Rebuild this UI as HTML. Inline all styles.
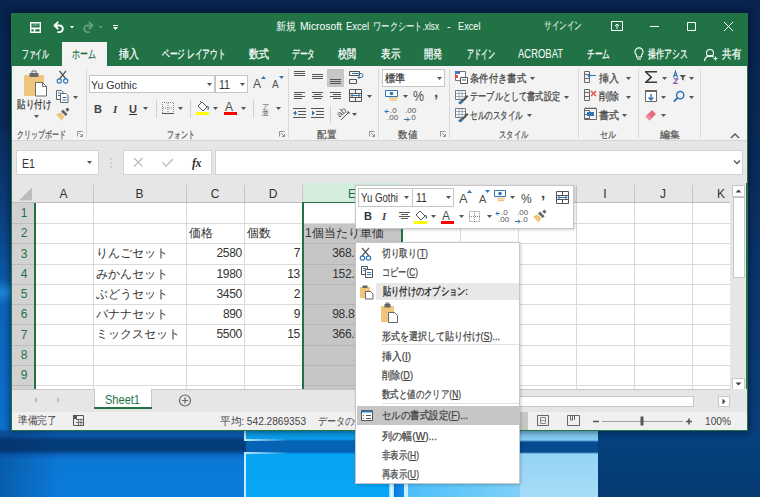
<!DOCTYPE html>
<html><head><meta charset="utf-8">
<style>
html,body{margin:0;padding:0;width:760px;height:497px;overflow:hidden;background:#0a2b5c;font-family:"Liberation Sans",sans-serif;}
.a{position:absolute;}
.t{position:absolute;white-space:nowrap;line-height:1;}
.s{-webkit-text-stroke:0.25px currentColor;}
svg{position:absolute;overflow:visible;}
</style></head><body>
<div class="a" style="left:0px;top:0px;width:760px;height:497px;background:linear-gradient(180deg,#08234c 0px,#0a2a58 150px,#0b3670 300px,#0a3e7a 430px,#0a3e7a 497px);"></div>
<div class="a" style="left:0px;top:130px;width:11px;height:300px;background:linear-gradient(180deg,#0a2d5c 0px,#0b4080 90px,#0b5aa8 150px,#1a86d8 162px,#0c64ba 175px,#0c6fcc 300px);"></div>
<div class="a" style="left:0px;top:430px;width:244px;height:67px;background:linear-gradient(180deg,#0e70cc 0px,#0c62b8 5px,#053e7e 10px,#043b78 20px,#0a66c4 25px,#0b78d6 30px,#0b7bd9 67px);"></div>
<div class="a" style="left:0px;top:430px;width:60px;height:67px;background:linear-gradient(90deg,rgba(4,40,90,0.35),rgba(4,40,90,0));"></div>
<div class="a" style="left:246px;top:430px;width:274px;height:67px;background:linear-gradient(180deg,#0ca0ee 0px,#0a9fec 9px,#0563b6 11px,#0562b5 22px,#05a3f3 24px,#08a7f5 67px);"></div>
<div class="a" style="left:520px;top:430px;width:78px;height:67px;background:linear-gradient(180deg,#84ccf3 0px,#86cdf3 10px,#064a8f 12px,#064a8f 22px,#96d4f5 24px,#a8dcf8 67px);"></div>
<div class="a" style="left:598px;top:430px;width:162px;height:67px;background:linear-gradient(180deg,#04427f,#063a72);"></div>
<div class="a" style="left:389px;top:470px;width:5px;height:27px;background:linear-gradient(90deg,#7fd6ff,#e0f8ff,#9fe0ff);"></div>
<div class="a" style="left:394px;top:470px;width:10px;height:27px;background:linear-gradient(90deg,#0a78dc,#0f90ea);"></div>
<div class="a" style="left:404px;top:470px;width:4px;height:27px;background:#c8f0ff;"></div>
<div class="a" style="left:408px;top:470px;width:112px;height:27px;background:linear-gradient(90deg,#4cc0f8,#7ed0f8);"></div>
<div class="a" style="left:244px;top:430px;width:2px;height:10px;background:#c0ecff;"></div>
<div class="a" style="left:244px;top:453px;width:2px;height:44px;background:#c0ecff;"></div>
<div class="a" style="left:244px;top:439px;width:45px;height:2px;background:linear-gradient(90deg,#c0ecff,rgba(192,236,255,0));"></div>
<div class="a" style="left:244px;top:452px;width:45px;height:2px;background:linear-gradient(90deg,#c0ecff,rgba(192,236,255,0));"></div>
<div class="a" style="left:11px;top:13px;width:737px;height:418px;background:#217346;box-shadow:0 0 6px 2px rgba(0,10,30,0.45);"></div>
<div class="t " style="left:276px;top:21px;font-size:11px;color:#ffffff;transform:scaleX(0.909);transform-origin:0 0;">新規</div>
<div class="t " style="left:299.5px;top:21px;font-size:11px;color:#ffffff;transform:scaleX(0.941);transform-origin:0 0;">Microsoft</div>
<div class="t " style="left:345.5px;top:21px;font-size:11px;color:#ffffff;transform:scaleX(0.855);transform-origin:0 0;">Excel</div>
<div class="t " style="left:372.5px;top:21px;font-size:11px;color:#ffffff;transform:scaleX(0.750);transform-origin:0 0;">ワークシート.xlsx</div>
<div class="t " style="left:447px;top:21px;font-size:11px;color:#ffffff;">-</div>
<div class="t " style="left:457.5px;top:21px;font-size:11px;color:#ffffff;transform:scaleX(0.836);transform-origin:0 0;">Excel</div>
<div class="t " style="left:544px;top:20px;font-size:11px;color:#ffffff;transform:scaleX(0.691);transform-origin:0 0;">サインイン</div>
<div class="a" style="left:62px;top:42px;width:45px;height:24px;background:#f3f3f3;"></div>
<div class="t s" style="left:22px;top:48px;font-size:12px;color:#ffffff;transform:scaleX(0.562);transform-origin:0 0;">ファイル</div>
<div class="t s" style="left:119px;top:48px;font-size:12px;color:#ffffff;transform:scaleX(0.833);transform-origin:0 0;">挿入</div>
<div class="t s" style="left:162px;top:48px;font-size:12px;color:#ffffff;transform:scaleX(0.639);transform-origin:0 0;">ページ レイアウト</div>
<div class="t s" style="left:249px;top:48px;font-size:12px;color:#ffffff;transform:scaleX(0.833);transform-origin:0 0;">数式</div>
<div class="t s" style="left:292px;top:48px;font-size:12px;color:#ffffff;transform:scaleX(0.639);transform-origin:0 0;">データ</div>
<div class="t s" style="left:338px;top:48px;font-size:12px;color:#ffffff;transform:scaleX(0.750);transform-origin:0 0;">校閲</div>
<div class="t s" style="left:381px;top:48px;font-size:12px;color:#ffffff;transform:scaleX(0.792);transform-origin:0 0;">表示</div>
<div class="t s" style="left:424px;top:48px;font-size:12px;color:#ffffff;transform:scaleX(0.771);transform-origin:0 0;">開発</div>
<div class="t s" style="left:467px;top:48px;font-size:12px;color:#ffffff;transform:scaleX(0.583);transform-origin:0 0;">アドイン</div>
<div class="t " style="left:518px;top:48px;font-size:12px;color:#ffffff;transform:scaleX(0.788);transform-origin:0 0;">ACROBAT</div>
<div class="t s" style="left:587px;top:48px;font-size:12px;color:#ffffff;transform:scaleX(0.639);transform-origin:0 0;">チーム</div>
<div class="t s" style="left:648px;top:48px;font-size:12px;color:#ffffff;transform:scaleX(0.658);transform-origin:0 0;">操作アシス</div>
<div class="t s" style="left:722px;top:48px;font-size:12px;color:#ffffff;transform:scaleX(0.792);transform-origin:0 0;">共有</div>
<div class="t s" style="left:72px;top:48px;font-size:12px;color:#217346;transform:scaleX(0.667);transform-origin:0 0;">ホーム</div>
<div class="a" style="left:12px;top:66px;width:735px;height:74px;background:#f3f3f3;"></div>
<div class="a" style="left:12px;top:140px;width:735px;height:1px;background:#d5d5d5;"></div>
<div class="a" style="left:86px;top:69px;width:1px;height:69px;background:#d9d9d9;"></div>
<div class="a" style="left:288px;top:69px;width:1px;height:69px;background:#d9d9d9;"></div>
<div class="a" style="left:378px;top:69px;width:1px;height:69px;background:#d9d9d9;"></div>
<div class="a" style="left:449px;top:69px;width:1px;height:69px;background:#d9d9d9;"></div>
<div class="a" style="left:578px;top:69px;width:1px;height:69px;background:#d9d9d9;"></div>
<div class="a" style="left:638px;top:69px;width:1px;height:69px;background:#d9d9d9;"></div>
<div class="a" style="left:700px;top:69px;width:1px;height:69px;background:#d9d9d9;"></div>
<div class="t s" style="left:17px;top:130px;font-size:10px;color:#5a5a5a;transform:scaleX(0.700);transform-origin:0 0;">クリップボード</div>
<div class="t s" style="left:167px;top:130px;font-size:10px;color:#5a5a5a;transform:scaleX(0.700);transform-origin:0 0;">フォント</div>
<div class="t s" style="left:317px;top:130px;font-size:10px;color:#5a5a5a;transform:scaleX(0.950);transform-origin:0 0;">配置</div>
<div class="t s" style="left:398px;top:130px;font-size:10px;color:#5a5a5a;transform:scaleX(0.950);transform-origin:0 0;">数値</div>
<div class="t s" style="left:499px;top:130px;font-size:10px;color:#5a5a5a;transform:scaleX(0.725);transform-origin:0 0;">スタイル</div>
<div class="t s" style="left:600px;top:130px;font-size:10px;color:#5a5a5a;transform:scaleX(0.800);transform-origin:0 0;">セル</div>
<div class="t s" style="left:660px;top:130px;font-size:10px;color:#5a5a5a;">編集</div>
<svg width="760" height="497" style="left:0;top:0" viewBox="0 0 760 497"><path d="M30 22h11v11h-11z" fill="#fff"/><path d="M31.4 23.4h8.2v4.1h-8.2z" fill="#217346"/><path d="M32.6 23.4h5.8v2.9h-5.8z" fill="#fff" opacity="0.25"/><path d="M31.4 29.3h2.3v2.3h-2.3zM35.3 29.3h4.3v2.3h-4.3z" fill="#217346"/><path d="M54.5 25.5l3.2-3.2M54.5 25.5l3.2 3.2M54.5 25.5h5a3.3 3.3 0 0 1 0 6.6h-1.5" fill="none" stroke="#fff" stroke-width="1.9" stroke-linecap="round"/><path d="M70 26h4l-2 2.5z" fill="#fff"/><path d="M92.5 25.5l-3.2-3.2M92.5 25.5l-3.2 3.2M92.5 25.5h-5a3.3 3.3 0 0 0 0 6.6h1.5" fill="none" stroke="#5f9f7c" stroke-width="1.9" stroke-linecap="round"/><path d="M98.5 26h4l-2 2.5z" fill="#5f9f7c"/><path d="M113 25.5h5" stroke="#fff" stroke-width="1"/><path d="M113 27h5l-2.5 3z" fill="#fff"/><g fill="none" stroke="#fff" stroke-width="1"><path d="M611.5 21.5h11v9h-11z"/><path d="M617 29v-5M615 26l2-2 2 2"/><path d="M650 26.5h9"/><path d="M687.5 22.5h8v8h-8z"/><path d="M724 22l9 9M733 22l-9 9"/></g><g fill="none" stroke="#fff" stroke-width="1.1"><path d="M636.5 57v-2a4 4 0 1 1 5 0v2z"/><path d="M637 59h4"/><circle cx="710" cy="53" r="3.5"/><path d="M704.5 61a5.5 5.5 0 0 1 9-4"/><path d="M713.5 58.5h4M715.5 56.5v4"/></g><path d="M77.5 136.5v-5h5M79 133l3.5 3.5M82.5 134v2.5h-2.5" fill="none" stroke="#888" stroke-width="0.9"/><path d="M279.5 136.5v-5h5M281 133l3.5 3.5M284.5 134v2.5h-2.5" fill="none" stroke="#888" stroke-width="0.9"/><path d="M369.5 136.5v-5h5M371 133l3.5 3.5M374.5 134v2.5h-2.5" fill="none" stroke="#888" stroke-width="0.9"/><path d="M440.5 136.5v-5h5M442 133l3.5 3.5M445.5 134v2.5h-2.5" fill="none" stroke="#888" stroke-width="0.9"/><path d="M731 138l4-4 4 4" fill="none" stroke="#555" stroke-width="1.4"/></svg>
<div class="t s" style="left:17px;top:99px;font-size:11px;color:#333;transform:scaleX(0.773);transform-origin:0 0;">貼り付け</div>
<div class="a" style="left:89px;top:75px;width:126px;height:18px;background:#fff;border:1px solid #c6c6c6;box-sizing:border-box;"></div>
<div class="a" style="left:215px;top:75px;width:33px;height:18px;background:#fff;border:1px solid #c6c6c6;box-sizing:border-box;"></div>
<div class="t " style="left:91px;top:80px;font-size:11px;color:#333;transform:scaleX(0.964);transform-origin:0 0;">Yu Gothic</div>
<div class="t " style="left:219px;top:79px;font-size:12px;color:#333;transform:scaleX(0.882);transform-origin:0 0;">11</div>
<div class="t " style="left:253px;top:78px;font-size:12px;color:#505050;font-weight:normal;">A</div>
<div class="t " style="left:272px;top:80px;font-size:10px;color:#505050;">A</div>
<div class="t " style="left:94px;top:104px;font-size:11px;color:#444;font-weight:bold;">B</div>
<div class="t " style="left:113px;top:104px;font-size:11px;color:#444;font-style:italic;font-weight:bold;font-family:Liberation Serif,serif;">I</div>
<div class="t " style="left:129px;top:104px;font-size:11px;color:#444;font-weight:bold;">U</div>
<div class="a" style="left:129px;top:114px;width:8px;height:1px;background:#333;"></div>
<div class="a" style="left:156px;top:100px;width:1px;height:18px;background:#d0d0d0;"></div>
<div class="a" style="left:190px;top:100px;width:1px;height:18px;background:#d0d0d0;"></div>
<div class="a" style="left:196px;top:112px;width:13px;height:3px;background:#ffff00;"></div>
<div class="t " style="left:225px;top:101px;font-size:12px;color:#505050;">A</div>
<div class="a" style="left:224px;top:112px;width:13px;height:3px;background:#ff0000;"></div>
<div class="a" style="left:253px;top:100px;width:1px;height:18px;background:#d0d0d0;"></div>
<div class="t " style="left:262px;top:103px;font-size:7px;color:#505050;">ア</div>
<div class="t " style="left:262px;top:109px;font-size:7px;color:#505050;">亜</div>
<div class="a" style="left:327px;top:69px;width:17px;height:18px;background:#c6c6c6;"></div>
<div class="a" style="left:330px;top:106px;width:1px;height:17px;background:#d0d0d0;"></div>
<div class="t " style="left:337px;top:108px;font-size:9px;color:#555;transform:rotate(-40deg);transform-origin:5px 5px;">ab</div>
<div class="a" style="left:382px;top:69px;width:63px;height:18px;background:#fff;border:1px solid #c6c6c6;box-sizing:border-box;"></div>
<div class="t s" style="left:385px;top:73px;font-size:11px;color:#333;transform:scaleX(0.909);transform-origin:0 0;">標準</div>
<div class="t " style="left:413px;top:89px;font-size:14px;color:#505050;transform:scaleX(0.883);transform-origin:0 0;">%</div>
<div class="t " style="left:434px;top:84px;font-size:15px;color:#505050;font-weight:bold;">,</div>
<div class="t " style="left:390px;top:107px;font-size:8px;color:#555;">.0</div>
<div class="t " style="left:387px;top:114px;font-size:8px;color:#555;">.00</div>
<div class="t " style="left:405px;top:107px;font-size:8px;color:#555;">.00</div>
<div class="t " style="left:409px;top:114px;font-size:8px;color:#555;">.0</div>
<div class="t s" style="left:470px;top:73px;font-size:11px;color:#444444;transform:scaleX(0.848);transform-origin:0 0;">条件付き書式</div>
<div class="t s" style="left:470px;top:91px;font-size:11px;color:#444444;transform:scaleX(0.744);transform-origin:0 0;">テーブルとして書式設定</div>
<div class="t s" style="left:470px;top:110px;font-size:11px;color:#444444;transform:scaleX(0.688);transform-origin:0 0;">セルのスタイル</div>
<div class="t s" style="left:599px;top:73px;font-size:11px;color:#444444;transform:scaleX(0.909);transform-origin:0 0;">挿入</div>
<div class="t s" style="left:599px;top:91px;font-size:11px;color:#444444;transform:scaleX(0.909);transform-origin:0 0;">削除</div>
<div class="t s" style="left:599px;top:110px;font-size:11px;color:#444444;transform:scaleX(0.909);transform-origin:0 0;">書式</div>
<div class="a" style="left:12px;top:141px;width:735px;height:42px;background:#e6e6e6;"></div>
<div class="a" style="left:16px;top:150px;width:83px;height:25px;background:#fff;border:1px solid #d4d4d4;box-sizing:border-box;"></div>
<div class="t " style="left:22px;top:158px;font-size:12px;color:#333;transform:scaleX(0.885);transform-origin:0 0;">E1</div>
<div class="a" style="left:123px;top:150px;width:89px;height:25px;background:#fff;border:1px solid #d4d4d4;box-sizing:border-box;"></div>
<div class="t " style="left:192px;top:157px;font-size:12px;color:#333;font-family:Liberation Serif,serif;font-weight:bold;font-style:italic;letter-spacing:-0.5px;">fx</div>
<div class="a" style="left:215px;top:150px;width:528px;height:25px;background:#fff;border:1px solid #d4d4d4;box-sizing:border-box;"></div>
<div class="a" style="left:12px;top:183px;width:720px;height:206px;background:#fff;"></div>
<div class="a" style="left:12px;top:183px;width:720px;height:20px;background:#e6e6e6;"></div>
<div class="a" style="left:302px;top:183px;width:100px;height:20px;background:#d3ecdc;"></div>
<div class="a" style="left:12px;top:203px;width:22px;height:186px;background:#d2d2d2;"></div>
<div class="a" style="left:304px;top:223px;width:98px;height:166px;background:#c6c6c6;"></div>
<div class="a" style="left:93px;top:203px;width:1px;height:186px;background:#dadada;"></div>
<div class="a" style="left:186px;top:203px;width:1px;height:186px;background:#dadada;"></div>
<div class="a" style="left:244px;top:203px;width:1px;height:186px;background:#dadada;"></div>
<div class="a" style="left:302px;top:203px;width:1px;height:186px;background:#dadada;"></div>
<div class="a" style="left:402px;top:203px;width:1px;height:186px;background:#dadada;"></div>
<div class="a" style="left:460px;top:203px;width:1px;height:186px;background:#dadada;"></div>
<div class="a" style="left:518px;top:203px;width:1px;height:186px;background:#dadada;"></div>
<div class="a" style="left:576px;top:203px;width:1px;height:186px;background:#dadada;"></div>
<div class="a" style="left:634px;top:203px;width:1px;height:186px;background:#dadada;"></div>
<div class="a" style="left:692px;top:203px;width:1px;height:186px;background:#dadada;"></div>
<div class="a" style="left:35px;top:223px;width:697px;height:1px;background:#dadada;"></div>
<div class="a" style="left:12px;top:223px;width:22px;height:1px;background:#bdbdbd;"></div>
<div class="a" style="left:35px;top:243px;width:697px;height:1px;background:#dadada;"></div>
<div class="a" style="left:12px;top:243px;width:22px;height:1px;background:#bdbdbd;"></div>
<div class="a" style="left:35px;top:264px;width:697px;height:1px;background:#dadada;"></div>
<div class="a" style="left:12px;top:264px;width:22px;height:1px;background:#bdbdbd;"></div>
<div class="a" style="left:35px;top:284px;width:697px;height:1px;background:#dadada;"></div>
<div class="a" style="left:12px;top:284px;width:22px;height:1px;background:#bdbdbd;"></div>
<div class="a" style="left:35px;top:304px;width:697px;height:1px;background:#dadada;"></div>
<div class="a" style="left:12px;top:304px;width:22px;height:1px;background:#bdbdbd;"></div>
<div class="a" style="left:35px;top:324px;width:697px;height:1px;background:#dadada;"></div>
<div class="a" style="left:12px;top:324px;width:22px;height:1px;background:#bdbdbd;"></div>
<div class="a" style="left:35px;top:345px;width:697px;height:1px;background:#dadada;"></div>
<div class="a" style="left:12px;top:345px;width:22px;height:1px;background:#bdbdbd;"></div>
<div class="a" style="left:35px;top:365px;width:697px;height:1px;background:#dadada;"></div>
<div class="a" style="left:12px;top:365px;width:22px;height:1px;background:#bdbdbd;"></div>
<div class="a" style="left:35px;top:385px;width:697px;height:1px;background:#dadada;"></div>
<div class="a" style="left:12px;top:385px;width:22px;height:1px;background:#bdbdbd;"></div>
<div class="a" style="left:304px;top:243px;width:97px;height:1px;background:#b6b6b6;"></div>
<div class="a" style="left:304px;top:264px;width:97px;height:1px;background:#b6b6b6;"></div>
<div class="a" style="left:304px;top:284px;width:97px;height:1px;background:#b6b6b6;"></div>
<div class="a" style="left:304px;top:304px;width:97px;height:1px;background:#b6b6b6;"></div>
<div class="a" style="left:304px;top:324px;width:97px;height:1px;background:#b6b6b6;"></div>
<div class="a" style="left:304px;top:345px;width:97px;height:1px;background:#b6b6b6;"></div>
<div class="a" style="left:304px;top:365px;width:97px;height:1px;background:#b6b6b6;"></div>
<div class="a" style="left:304px;top:385px;width:97px;height:1px;background:#b6b6b6;"></div>
<div class="a" style="left:93px;top:185px;width:1px;height:18px;background:#c6c6c6;"></div>
<div class="a" style="left:186px;top:185px;width:1px;height:18px;background:#c6c6c6;"></div>
<div class="a" style="left:244px;top:185px;width:1px;height:18px;background:#c6c6c6;"></div>
<div class="a" style="left:302px;top:185px;width:1px;height:18px;background:#c6c6c6;"></div>
<div class="a" style="left:402px;top:185px;width:1px;height:18px;background:#c6c6c6;"></div>
<div class="a" style="left:460px;top:185px;width:1px;height:18px;background:#c6c6c6;"></div>
<div class="a" style="left:518px;top:185px;width:1px;height:18px;background:#c6c6c6;"></div>
<div class="a" style="left:576px;top:185px;width:1px;height:18px;background:#c6c6c6;"></div>
<div class="a" style="left:634px;top:185px;width:1px;height:18px;background:#c6c6c6;"></div>
<div class="a" style="left:692px;top:185px;width:1px;height:18px;background:#c6c6c6;"></div>
<div class="a" style="left:12px;top:202px;width:720px;height:1px;background:#bdbdbd;"></div>
<div class="a" style="left:302px;top:202px;width:100px;height:1px;background:#217346;"></div>
<div class="a" style="left:34px;top:203px;width:2px;height:186px;background:#217346;"></div>
<div class="a" style="left:302px;top:202px;width:2px;height:187px;background:#217346;"></div>
<div class="a" style="left:401px;top:202px;width:2px;height:187px;background:#217346;"></div>
<div class="t " style="left:58.5px;top:188px;font-size:12px;color:#333;width:10px;text-align:center;">A</div>
<div class="t " style="left:134.5px;top:188px;font-size:12px;color:#333;width:10px;text-align:center;">B</div>
<div class="t " style="left:210.0px;top:188px;font-size:12px;color:#333;width:10px;text-align:center;">C</div>
<div class="t " style="left:268.0px;top:188px;font-size:12px;color:#333;width:10px;text-align:center;">D</div>
<div class="t " style="left:347.0px;top:188px;font-size:12px;color:#217346;width:10px;text-align:center;">E</div>
<div class="t " style="left:426.0px;top:188px;font-size:12px;color:#333;width:10px;text-align:center;">F</div>
<div class="t " style="left:484.0px;top:188px;font-size:12px;color:#333;width:10px;text-align:center;">G</div>
<div class="t " style="left:542.0px;top:188px;font-size:12px;color:#333;width:10px;text-align:center;">H</div>
<div class="t " style="left:600.0px;top:188px;font-size:12px;color:#333;width:10px;text-align:center;">I</div>
<div class="t " style="left:658.0px;top:188px;font-size:12px;color:#333;width:10px;text-align:center;">J</div>
<div class="t " style="left:716.0px;top:188px;font-size:12px;color:#333;width:10px;text-align:center;">K</div>
<div class="t " style="left:13px;top:207.0px;font-size:12px;color:#217346;width:22px;text-align:center;">1</div>
<div class="t " style="left:13px;top:227.0px;font-size:12px;color:#217346;width:22px;text-align:center;">2</div>
<div class="t " style="left:13px;top:247.5px;font-size:12px;color:#217346;width:22px;text-align:center;">3</div>
<div class="t " style="left:13px;top:268.0px;font-size:12px;color:#217346;width:22px;text-align:center;">4</div>
<div class="t " style="left:13px;top:288.0px;font-size:12px;color:#217346;width:22px;text-align:center;">5</div>
<div class="t " style="left:13px;top:308.0px;font-size:12px;color:#217346;width:22px;text-align:center;">6</div>
<div class="t " style="left:13px;top:328.5px;font-size:12px;color:#217346;width:22px;text-align:center;">7</div>
<div class="t " style="left:13px;top:349.0px;font-size:12px;color:#217346;width:22px;text-align:center;">8</div>
<div class="t " style="left:13px;top:369.0px;font-size:12px;color:#217346;width:22px;text-align:center;">9</div>
<div class="t " style="left:189px;top:227px;font-size:12px;color:#333333;">価格</div>
<div class="t " style="left:247px;top:227px;font-size:12px;color:#333333;">個数</div>
<div class="t " style="left:305px;top:227px;font-size:12px;color:#333333;letter-spacing:0.05px;">1個当たり単価</div>
<div class="t " style="left:96px;top:247px;font-size:12px;color:#333333;">りんごセット</div>
<div class="t " style="left:122px;top:247px;font-size:12px;color:#333333;letter-spacing:-0.3px;width:120px;text-align:right;">2580</div>
<div class="t " style="left:180px;top:247px;font-size:12px;color:#333333;letter-spacing:-0.3px;width:120px;text-align:right;">7</div>
<div class="t " style="left:279px;top:247px;font-size:12px;color:#333333;letter-spacing:-0.3px;width:120px;text-align:right;">368.5714286</div>
<div class="t " style="left:96px;top:268px;font-size:12px;color:#333333;">みかんセット</div>
<div class="t " style="left:122px;top:268px;font-size:12px;color:#333333;letter-spacing:-0.3px;width:120px;text-align:right;">1980</div>
<div class="t " style="left:180px;top:268px;font-size:12px;color:#333333;letter-spacing:-0.3px;width:120px;text-align:right;">13</div>
<div class="t " style="left:279px;top:268px;font-size:12px;color:#333333;letter-spacing:-0.3px;width:120px;text-align:right;">152.3076923</div>
<div class="t " style="left:96px;top:288px;font-size:12px;color:#333333;">ぶどうセット</div>
<div class="t " style="left:122px;top:288px;font-size:12px;color:#333333;letter-spacing:-0.3px;width:120px;text-align:right;">3450</div>
<div class="t " style="left:180px;top:288px;font-size:12px;color:#333333;letter-spacing:-0.3px;width:120px;text-align:right;">2</div>
<div class="t " style="left:279px;top:288px;font-size:12px;color:#333333;letter-spacing:-0.3px;width:120px;text-align:right;">1725</div>
<div class="t " style="left:96px;top:308px;font-size:12px;color:#333333;">バナナセット</div>
<div class="t " style="left:122px;top:308px;font-size:12px;color:#333333;letter-spacing:-0.3px;width:120px;text-align:right;">890</div>
<div class="t " style="left:180px;top:308px;font-size:12px;color:#333333;letter-spacing:-0.3px;width:120px;text-align:right;">9</div>
<div class="t " style="left:279px;top:308px;font-size:12px;color:#333333;letter-spacing:-0.3px;width:120px;text-align:right;">98.88888889</div>
<div class="t " style="left:96px;top:328px;font-size:12px;color:#333333;">ミックスセット</div>
<div class="t " style="left:122px;top:328px;font-size:12px;color:#333333;letter-spacing:-0.3px;width:120px;text-align:right;">5500</div>
<div class="t " style="left:180px;top:328px;font-size:12px;color:#333333;letter-spacing:-0.3px;width:120px;text-align:right;">15</div>
<div class="t " style="left:279px;top:328px;font-size:12px;color:#333333;letter-spacing:-0.3px;width:120px;text-align:right;">366.6666667</div>
<div class="a" style="left:730px;top:183px;width:16px;height:206px;background:#e6e6e6;"></div>
<div class="a" style="left:732px;top:185px;width:13px;height:12px;background:#fff;border:1px solid #c6c6c6;box-sizing:border-box;"></div>
<div class="a" style="left:733px;top:197px;width:12px;height:81px;background:#fff;border:1px solid #c6c6c6;box-sizing:border-box;"></div>
<div class="a" style="left:732px;top:378px;width:13px;height:12px;background:#fff;border:1px solid #c6c6c6;box-sizing:border-box;"></div>
<div class="a" style="left:12px;top:389px;width:735px;height:23px;background:#e6e6e6;"></div>
<div class="a" style="left:12px;top:389px;width:718px;height:1px;background:#c6c6c6;"></div>
<div class="a" style="left:94px;top:389px;width:58px;height:19px;background:#fff;border-left:1px solid #c6c6c6;border-right:1px solid #c6c6c6;box-sizing:border-box;"></div>
<div class="a" style="left:94px;top:407px;width:58px;height:2px;background:#217346;"></div>
<div class="t " style="left:105px;top:394px;font-size:12px;color:#217346;transform:scaleX(0.920);transform-origin:0 0;">Sheet1</div>
<div class="a" style="left:440px;top:396px;width:254px;height:11px;background:#fff;border:1px solid #c6c6c6;box-sizing:border-box;"></div>
<div class="a" style="left:718px;top:396px;width:12px;height:11px;background:#fff;border:1px solid #c6c6c6;box-sizing:border-box;"></div>
<div class="a" style="left:12px;top:412px;width:735px;height:18px;background:#f0f0f0;"></div>
<div class="t " style="left:18px;top:415px;font-size:10.5px;color:#444;transform:scaleX(0.886);transform-origin:0 0;">準備完了</div>
<div class="t " style="left:220px;top:416px;font-size:10.5px;color:#444;transform:scaleX(0.965);transform-origin:0 0;">平均: 542.2869353</div>
<div class="t " style="left:318px;top:416px;font-size:10.5px;color:#444;transform:scaleX(0.824);transform-origin:0 0;">データの個数: 5</div>
<div class="a" style="left:520px;top:412px;width:8px;height:18px;background:#c6c6c6;"></div>
<div class="t " style="left:705px;top:416px;font-size:10.5px;color:#444;transform:scaleX(0.968);transform-origin:0 0;">100%</div>
<svg width="760" height="497" style="left:0;top:0" viewBox="0 0 760 497"><rect x="24" y="75" width="20" height="21" rx="1.5" fill="#efc67c"/><path d="M29.5 73h9v4h-9z" fill="#6b6b6b"/><path d="M32 71h4v3h-4z" fill="none" stroke="#6b6b6b" stroke-width="1"/><path d="M35.5 82.5h7l4 4v9.5h-11z" fill="#fff" stroke="#6b6b6b" stroke-width="1"/><path d="M42.5 82.5v4h4" fill="none" stroke="#6b6b6b" stroke-width="1"/><path d="M34 115h5l-2.5 3z" fill="#555"/><g fill="none" stroke-width="1.1"><path d="M59.5 71l6.5 8M66 71l-6.5 8" stroke="#555" stroke-width="1.2"/><circle cx="59.3" cy="81" r="2.1" stroke="#2e75b6"/><circle cx="65.7" cy="81" r="2.1" stroke="#2e75b6"/></g><path d="M56.5 90.5h5l1.5 1.5v7.5h-6.5z" fill="#fff" stroke="#666"/><path d="M60.5 93.5h5.5l2 2v7h-7.5z" fill="#fff" stroke="#666"/><path d="M58 93h2.5M58 95.5h2M62.5 97.5h4M62.5 100h4" stroke="#2e75b6" stroke-width="1"/><path d="M73 96h5l-2.5 3z" fill="#555"/><g transform="translate(0 0)"><path d="M56 114.5L60.5 112.5 64.5 116.5 61.5 120.5z" fill="#efc67c"/><path d="M61 111.5L63 109.6 67.6 114.2 65.6 116z" fill="#666"/><path d="M65.3 109.6L67.4 107.5 69.6 109.7 67.5 111.8z" fill="#666"/></g><path d="M207 83h5l-2.5 3z" fill="#555"/><path d="M240 83h5l-2.5 3z" fill="#555"/><path d="M261 79h5l-2.5-3z" fill="#2e75b6"/><path d="M279 76h5l-2.5 3z" fill="#2e75b6"/><path d="M143 107h5l-2.5 3z" fill="#555"/><g fill="none" stroke="#888" stroke-width="1" stroke-dasharray="1 1"><path d="M162.5 113V102.5h11V113"/><path d="M168 103v10M163 108h10"/></g><path d="M162 113.5h12" stroke="#555"/><path d="M178 107h5l-2.5 3z" fill="#555"/><path d="M198 106l4-4 5 5-4 4z" fill="#fff" stroke="#555" stroke-width="1"/><path d="M207.5 106c1 1.5 1.5 3 0 3.5" fill="none" stroke="#2e75b6" stroke-width="1.3"/><path d="M200 101l2 2" stroke="#555"/><path d="M213 107h5l-2.5 3z" fill="#555"/><path d="M241 107h5l-2.5 3z" fill="#555"/><path d="M276 107h5l-2.5 3z" fill="#555"/><path d="M294 71.5h11M294 73.5h11M294 75.5h11" stroke="#555" stroke-width="1" fill="none"/><path d="M312 74.5h11M312 76.5h11M312 78.5h11" stroke="#555" stroke-width="1" fill="none"/><path d="M330 79.5h11M330 81.5h11M330 83.5h11" stroke="#555" stroke-width="1" fill="none"/><path d="M294 92.5h11M294 94.5h8M294 96.5h11M294 98.5h8" stroke="#555" stroke-width="1" fill="none"/><path d="M312 92.5h11M313.5 94.5h8M312 96.5h11M313.5 98.5h8" stroke="#555" stroke-width="1" fill="none"/><path d="M330 92.5h11M333 94.5h8M330 96.5h11M333 98.5h8" stroke="#555" stroke-width="1" fill="none"/><g fill="none" stroke="#555" stroke-width="1"><path d="M349.5 71.5h10v4h-10zM349.5 79.5h7v4h-7z"/></g><path d="M352 73.5h9a2 2 0 0 1 0 4h-3l1.5-1.5M358 77.5l1.5 1.5" fill="none" stroke="#2e75b6" stroke-width="1"/><g fill="none" stroke="#555" stroke-width="1"><path d="M349.5 89.5h12v12h-12zM349.5 93.5h12M349.5 97.5h12M355.5 89.5v4M355.5 97.5v4"/></g><path d="M351 95.5h9M351 95.5l1.5-1.5M351 95.5l1.5 1.5M360 95.5l-1.5-1.5M360 95.5l-1.5 1.5" stroke="#2e75b6" stroke-width="1" fill="none"/><path d="M367 95h5l-2.5 3z" fill="#555"/><path d="M293 108.5h13M298 111.5h8M298 114.5h8M293 117.5h13" stroke="#555" fill="none"/><path d="M293 113l3-2.5v5z" fill="#2e75b6"/><path d="M297 113h-3" stroke="#2e75b6"/><path d="M311 108.5h13M316 111.5h8M316 114.5h8M311 117.5h13" stroke="#555" fill="none"/><path d="M315 113l-3-2.5v5z" fill="#2e75b6"/><path d="M341 120l8-8M347 112h2v2" stroke="#555" fill="none"/><path d="M352 113h5l-2.5 3z" fill="#555"/><path d="M437 77h5l-2.5 3z" fill="#555"/><path d="M385.5 90.5h12v6h-12z" fill="#fff" stroke="#2e75b6"/><circle cx="391.5" cy="93.5" r="1.8" fill="#2e75b6"/><path d="M389 98h9M390 100h7" stroke="#efc67c" stroke-width="1.5"/><path d="M403 95h5l-2.5 3z" fill="#555"/><path d="M385 111.5h4M385 111.5l2-2M385 111.5l2 2" stroke="#2e75b6" fill="none"/><path d="M404 119.5h5M409 119.5l-2-2M409 119.5l-2 2" stroke="#2e75b6" fill="none"/><path d="M455.5 71.5h10v9h-10z" fill="#fff" stroke="#777"/><path d="M455 71h5v3h-5z" fill="#4472c4"/><path d="M455 75h3v3h-3z" fill="#e84c3d"/><path d="M460.5 77.5h7v6h-7z" fill="#fff" stroke="#555"/><path d="M462 80h4" stroke="#555"/><path d="M455.5 90.5h10v9h-10z" fill="#fff" stroke="#777"/><path d="M456 93.5h9M456 96.5h9M459 91v8M462 91v8" stroke="#9ab" fill="none"/><path d="M459 103l8-8 1.5 1.5-8 8z" fill="#555"/><path d="M458 103l3-3 2 2-3 2z" fill="#2e75b6"/><path d="M455.5 108.5h10v9h-10z" fill="#fff" stroke="#777"/><path d="M456 111.5h9M456 114.5h9M459 109v8M462 109v8" stroke="#9ab" fill="none"/><path d="M459 121l8-8 1.5 1.5-8 8z" fill="#555"/><path d="M458 121l3-3 2 2-3 2z" fill="#2e75b6"/><path d="M530 77h5l-2.5 3z" fill="#555"/><path d="M564 96h5l-2.5 3z" fill="#555"/><path d="M527 114h5l-2.5 3z" fill="#555"/><path d="M584.5 74.5h5v4h-5zM584.5 78.5h5v4h-5z" fill="none" stroke="#666"/><path d="M584.5 71.5h5v3h-5z" fill="none" stroke="#666"/><path d="M588 75.5h8M588 75.5l2-2M588 75.5l2 2" stroke="#2e75b6" fill="none" stroke-width="1.2"/><path d="M584.5 92.5h5v4h-5zM584.5 96.5h5v4h-5z" fill="none" stroke="#666"/><path d="M584.5 89.5h5v3h-5z" fill="none" stroke="#666"/><path d="M591 91l5 5M596 91l-5 5" stroke="#e74c3c" stroke-width="1.3"/><path d="M584.5 110.5h5v4h-5zM584.5 114.5h5v4h-5z" fill="none" stroke="#666"/><path d="M584.5 108.5h12v11h-12z" fill="none" stroke="#666"/><path d="M587 112h7v4h-7z" fill="#2e75b6"/><path d="M586 107v2M589 107v2M592 107v2M595 107v2" stroke="#666"/><path d="M626 77h5l-2.5 3z" fill="#555"/><path d="M626 96h5l-2.5 3z" fill="#555"/><path d="M622 114h5l-2.5 3z" fill="#555"/><path d="M645 71.8h12M645 82.2h12M645.8 72l5.5 5.2-5.5 5.2" fill="none" stroke="#3a3a3a" stroke-width="1.6"/><path d="M662 77h5l-2.5 3z" fill="#555"/><path d="M673.5 77.5l2-6 2 6M674.3 75.5h2.5" fill="none" stroke="#2e75b6" stroke-width="1.2"/><path d="M673.8 78.8h4l-4 4.6h4" fill="none" stroke="#8a5bb5" stroke-width="1.2"/><path d="M679.5 75h6.5l-2.3 2.6v3l-1.8-0.8v-2.2z" fill="#555"/><path d="M689 77h5l-2.5 3z" fill="#555"/><path d="M645.5 90.5h11v11h-11z" fill="#fff" stroke="#666"/><path d="M645 90h12v2h-12z" fill="#666"/><path d="M651 94v6M648.5 97.5l2.5 2.5 2.5-2.5" fill="none" stroke="#2e75b6" stroke-width="1.4"/><path d="M661 96h5l-2.5 3z" fill="#555"/><circle cx="680.2" cy="95.2" r="3.6" fill="none" stroke="#2e75b6" stroke-width="1.5"/><path d="M677.5 98l-3.2 3.2" stroke="#2e75b6" stroke-width="1.8" stroke-linecap="round"/><path d="M689 96h5l-2.5 3z" fill="#555"/><path d="M645.5 116.5l6.5-6.5 4 4-6.5 6.5z" fill="#e66b7f"/><path d="M645.5 116.5l2.2-2.2 4 4-2.2 2.2z" fill="#f08da0"/><path d="M661 114h5l-2.5 3z" fill="#555"/><path d="M87 161h5l-2.5 3z" fill="#555"/><path d="M111 158.5v1M111 162.5v1M111 166.5v1" stroke="#999" stroke-width="1.2"/><path d="M134 158l8.5 8.5M142.5 158l-8.5 8.5" stroke="#bdbdbd" stroke-width="1.3"/><path d="M162.5 162.5l3.5 3.5 7-7" fill="none" stroke="#c3c3c3" stroke-width="1.6"/><path d="M734 160.5l3 3 3-3" fill="none" stroke="#555" stroke-width="1.3"/><path d="M19 200.5h13v-13z" fill="#bdbdbd"/><path d="M735.5 192.5h6l-3-3z" fill="#444"/><path d="M735.5 382.5h6l-3 3z" fill="#444"/><path d="M37 397l-3 3 3 3z" fill="#bbb"/><path d="M57 397l3 3-3 3z" fill="#bbb"/><circle cx="185" cy="400.5" r="5.5" fill="none" stroke="#666" stroke-width="1.2"/><path d="M182 400.5h6M185 397.5v6" stroke="#666" stroke-width="1.2"/><path d="M722.5 398.5v6l3-3z" fill="#444"/><path d="M73.5 415.5h10v10h-10z" fill="none" stroke="#555"/><path d="M73 415h4v4h-4z" fill="#555"/><path d="M76 419.5h7M76 422.5h7M78.5 419v6M81 419v6" stroke="#555" stroke-width="0.8"/><path d="M537.5 415.5h11v10h-11z" fill="none" stroke="#666"/><path d="M540.5 417.5h5v6h-5z" fill="none" stroke="#888"/><path d="M541 420.5h4" stroke="#999"/><path d="M567.5 415.5h12v10h-12z" fill="none" stroke="#666"/><path d="M570.5 415.5v4.5h2v-4.5M574.5 415.5v4.5" fill="none" stroke="#666"/><path d="M602 421.5h81" stroke="#a0a0a0" stroke-width="1"/><path d="M593 421.5h6M686 421.5h6M689 418.5v6" stroke="#555" fill="none" stroke-width="1.6"/><path d="M640.5 416.5h3v9h-3z" fill="#555"/></svg>
<div class="a" style="left:355px;top:185px;width:219px;height:44px;background:#fff;border:1px solid #c6c6c6;box-sizing:border-box;box-shadow:1px 1px 3px rgba(0,0,0,0.18);"></div>
<div class="a" style="left:358px;top:188px;width:55px;height:19px;background:#fff;border:1px solid #c6c6c6;box-sizing:border-box;"></div>
<div class="a" style="left:412px;top:188px;width:42px;height:19px;background:#fff;border:1px solid #c6c6c6;box-sizing:border-box;"></div>
<div class="t " style="left:361px;top:192px;font-size:12px;color:#333;transform:scaleX(0.804);transform-origin:0 0;">Yu Gothi</div>
<div class="t " style="left:416px;top:192px;font-size:12px;color:#333;transform:scaleX(0.882);transform-origin:0 0;">11</div>
<div class="t " style="left:459px;top:192px;font-size:13px;color:#505050;">A</div>
<div class="t " style="left:479px;top:194px;font-size:11px;color:#505050;">A</div>
<div class="t " style="left:521px;top:193px;font-size:12px;color:#444;letter-spacing:0.33px;">%</div>
<div class="t " style="left:541px;top:185px;font-size:15px;color:#444;font-weight:bold;">,</div>
<div class="t " style="left:364px;top:211px;font-size:11px;color:#333;font-weight:bold;">B</div>
<div class="t " style="left:382px;top:211px;font-size:11px;color:#444;font-style:italic;font-weight:bold;font-family:Liberation Serif,serif;">I</div>
<div class="a" style="left:414px;top:221px;width:13px;height:3px;background:#ffff00;"></div>
<div class="t " style="left:442px;top:210px;font-size:12px;color:#505050;">A</div>
<div class="a" style="left:441px;top:221px;width:13px;height:3px;background:#ff0000;"></div>
<div class="t " style="left:501px;top:209px;font-size:8px;color:#555;">.0</div>
<div class="t " style="left:498px;top:216px;font-size:8px;color:#555;">.00</div>
<div class="t " style="left:517px;top:209px;font-size:8px;color:#555;">.00</div>
<div class="t " style="left:521px;top:216px;font-size:8px;color:#555;">.0</div>
<svg width="760" height="497" style="left:0;top:0" viewBox="0 0 760 497"><path d="M404 196h5l-2.5 3z" fill="#555"/><path d="M446 196h5l-2.5 3z" fill="#555"/><path d="M467 193h5l-2.5-3z" fill="#2e75b6"/><path d="M485 190h5l-2.5 3z" fill="#2e75b6"/><path d="M494.5 190.5h11v6h-11z" fill="#fff" stroke="#2e75b6"/><circle cx="500" cy="193.5" r="1.8" fill="#2e75b6"/><path d="M497 198.5h8M498 200.5h6" stroke="#efc67c" stroke-width="1.5"/><path d="M510 196h5l-2.5 3z" fill="#555"/><g fill="none" stroke="#555"><path d="M556.5 191.5h12v12h-12zM556.5 195.5h12M556.5 199.5h12M562.5 191.5v4M562.5 199.5v4"/></g><path d="M558 197.5h9M558 197.5l1.5-1.5M558 197.5l1.5 1.5M567 197.5l-1.5-1.5M567 197.5l-1.5 1.5" stroke="#2e75b6" fill="none"/><path d="M399 212.5h11M401 214.5h7M399 216.5h11M401 218.5h7" stroke="#555" stroke-width="1" fill="none"/><path d="M416 215l4-4 5 5-4 4z" fill="#fff" stroke="#555" stroke-width="1"/><path d="M425.5 215c1 1.5 1.5 3 0 3.5" fill="none" stroke="#2e75b6" stroke-width="1.3"/><path d="M431 215h5l-2.5 3z" fill="#555"/><path d="M459 215h5l-2.5 3z" fill="#555"/><g fill="none" stroke="#888" stroke-width="1" stroke-dasharray="1 1"><path d="M469.5 211.5h10v10h-10z"/><path d="M474.5 211v11M469 216.5h11"/></g><path d="M487 215h5l-2.5 3z" fill="#555"/><path d="M496 213.5h4M496 213.5l2-2M496 213.5l2 2" stroke="#2e75b6" fill="none"/><path d="M515 221.5h5M520 221.5l-2-2M520 221.5l-2 2" stroke="#2e75b6" fill="none"/><g transform="translate(477 102)"><path d="M56 114.5L60.5 112.5 64.5 116.5 61.5 120.5z" fill="#efc67c"/><path d="M61 111.5L63 109.6 67.6 114.2 65.6 116z" fill="#666"/><path d="M65.3 109.6L67.4 107.5 69.6 109.7 67.5 111.8z" fill="#666"/></g></svg>
<div class="a" style="left:355px;top:242px;width:165px;height:242px;background:#fff;border:1px solid #c6c6c6;box-sizing:border-box;box-shadow:1px 1px 3px rgba(0,0,0,0.2);"></div>
<div class="t s" style="left:382px;top:248px;font-size:11px;color:#444444;transform:scaleX(0.792);transform-origin:0 0;">切り取り(<u>T</u>)</div>
<div class="t s" style="left:382px;top:267px;font-size:11px;color:#444444;transform:scaleX(0.745);transform-origin:0 0;">コピー(<u>C</u>)</div>
<div class="a" style="left:376px;top:283px;width:143px;height:17px;background:#e8e8e8;"></div>
<div class="t " style="left:383px;top:286px;font-size:11px;color:#333;font-weight:bold;transform:scaleX(0.748);transform-origin:0 0;">貼り付けのオプション:</div>
<div class="t s" style="left:382px;top:331px;font-size:11px;color:#444444;transform:scaleX(0.815);transform-origin:0 0;">形式を選択して貼り付け(<u>S</u>)...</div>
<div class="a" style="left:382px;top:344px;width:137px;height:1px;background:#e1e1e1;"></div>
<div class="t s" style="left:382px;top:351px;font-size:11px;color:#444444;transform:scaleX(0.895);transform-origin:0 0;">挿入(<u>I</u>)</div>
<div class="t s" style="left:382px;top:370px;font-size:11px;color:#444444;transform:scaleX(0.831);transform-origin:0 0;">削除(<u>D</u>)</div>
<div class="t s" style="left:382px;top:389px;font-size:11px;color:#444444;transform:scaleX(0.765);transform-origin:0 0;">数式と値のクリア(<u>N</u>)</div>
<div class="a" style="left:382px;top:403px;width:137px;height:1px;background:#e1e1e1;"></div>
<div class="a" style="left:357px;top:406px;width:162px;height:19px;background:#c6c6c6;"></div>
<div class="t s" style="left:382px;top:410px;font-size:11px;color:#444444;transform:scaleX(0.858);transform-origin:0 0;">セルの書式設定(<u>F</u>)...</div>
<div class="t s" style="left:382px;top:431px;font-size:11px;color:#444444;transform:scaleX(0.918);transform-origin:0 0;">列の幅(<u>W</u>)...</div>
<div class="t s" style="left:382px;top:450px;font-size:11px;color:#444444;transform:scaleX(0.766);transform-origin:0 0;">非表示(<u>H</u>)</div>
<div class="t s" style="left:382px;top:469px;font-size:11px;color:#444444;transform:scaleX(0.766);transform-origin:0 0;">再表示(<u>U</u>)</div>
<svg width="760" height="497" style="left:0;top:0" viewBox="0 0 760 497"><g fill="none" stroke-width="1.2"><path d="M362 248l7 8M369 248l-7 8" stroke="#555"/><circle cx="362.5" cy="258" r="2.2" stroke="#2e75b6"/><circle cx="368.5" cy="258" r="2.2" stroke="#2e75b6"/></g><g fill="#fff" stroke="#555" stroke-width="1"><path d="M361.5 266.5h6v8h-6z"/><path d="M365.5 269.5h7v8h-7z"/></g><path d="M363 268.5h3M363 270.5h2M367 272.5h4M367 274.5h4" stroke="#2e75b6"/><path d="M360 287h10v11h-10z" fill="#efc67c"/><path d="M362.5 285.5h5v2.5h-5z" fill="#666"/><path d="M365.5 291.5h5l2.5 2.5v5h-7.5z" fill="#fff" stroke="#666"/><path d="M381 306h13v16h-13z" fill="#efc67c"/><path d="M384.5 304h6v3.5h-6z" fill="#666"/><path d="M386 304.5v-1.5h3v1.5" fill="none" stroke="#666"/><path d="M388.5 312.5h6l3 3v7h-9z" fill="#fff" stroke="#666"/><path d="M361.5 410.5h11v10h-11z" fill="#fff" stroke="#555"/><path d="M361.5 410.5h11v2h-11z" fill="#2e75b6"/><path d="M363 415.5h1M366 415.5h5M363 418.5h1M366 418.5h5" stroke="#555"/></svg>
</body></html>
